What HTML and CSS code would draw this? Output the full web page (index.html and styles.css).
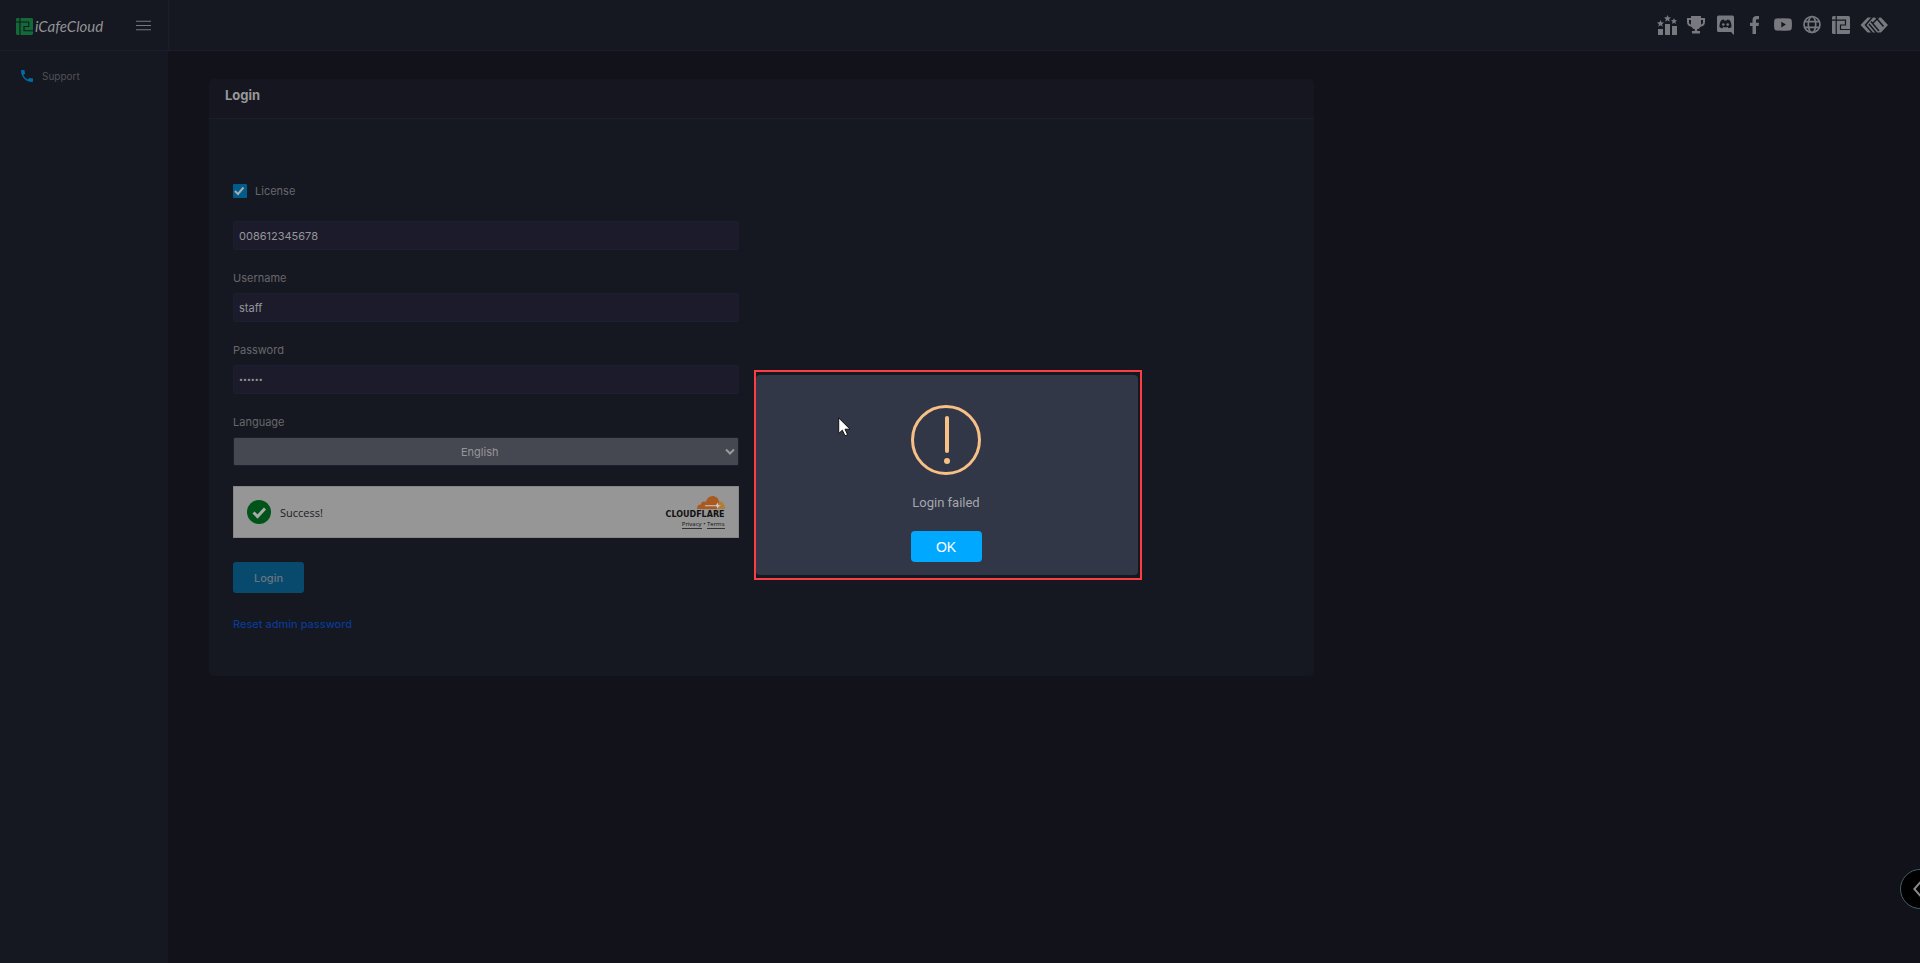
FILE: index.html
```html
<!DOCTYPE html>
<html lang="en">
<head>
<meta charset="utf-8">
<title>iCafeCloud - Login</title>
<link rel="stylesheet" href="styles.css">
</head>
<body>
<svg class="defs" aria-hidden="true">
  <symbol id="mark" viewBox="0 0 18 18"><rect width="18" height="18" rx="1.500"/><path fill="none" stroke="#151721" stroke-width="1.200" d="M4.200 0V18M0 4.200H13.500V9H8.500V13.500H18"/></symbol>
</svg>
<div class="app">
  <header class="topbar">
    <div class="brand">
      <a class="logo" href="#"><svg class="logo-mark"><use href="#mark"/></svg><span>iCafeCloud</span></a>
      <button class="menu" type="button" aria-label="Toggle menu"><svg viewBox="0 0 14 10"><path d="M0 1H14M0 5H14M0 9H14"/></svg></button>
    </div>
    <nav class="links" aria-label="Community">
      <a href="#" aria-label="Ranking"><svg viewBox="0 0 20 20"><path d="M1 14h5v6H1zM8 9h5v11H8zM15 11h5v9h-5zM10.500 0l1 2.300 2.500.2-1.900 1.700.6 2.500-2.200-1.400-2.200 1.400.6-2.500L7 2.500l2.500-.2zM3.500 5l1 2.300 2.500.2-1.900 1.700.6 2.500-2.200-1.400-2.200 1.400.6-2.500L0 7.500l2.500-.2zM17 3l.9 2 2.100.2-1.600 1.500.5 2.200-1.900-1.200-1.900 1.200.5-2.200L14 5.200l2.100-.2z"/></svg></a>
      <a href="#" aria-label="Tournaments"><svg viewBox="0 0 20 20"><path fill-rule="evenodd" d="M5 1h10v2h4v4c0 3-2 4.500-4.500 4.800C13.700 13.200 12.500 14 11.200 14.300V16H14v2.500H6V16h2.800v-1.700C7.500 14 6.300 13.200 5.500 11.800 3 11.500 1 10 1 7V3h4zM5 5H3v2c0 1.400.7 2.200 2 2.600zM15 5v4.600c1.300-.4 2-1.200 2-2.600V5z"/></svg></a>
      <a href="#" aria-label="Discord"><svg viewBox="0 0 20 20"><path fill-rule="evenodd" d="M3.500.5h14Q19 .5 19 2v18l-3-3H3.500Q2 17 2 15.500V2Q2 .5 3.500.5ZM6 5.500C5 7.500 4.400 9.500 4.500 12c1 .9 2 1.200 3 1.300l.7-1.200c1.500.4 3 .4 4.600 0l.7 1.200c1-.1 2-.5 3-1.300 0-2.500-.5-4.500-1.500-6.500-1-.5-1.800-.8-2.800-.9l-.4.9h-2.600l-.4-.9c-1 .1-1.900.4-2.800.9Z"/><circle cx="8.300" cy="9.500" r="1.300"/><circle cx="12.700" cy="9.500" r="1.300"/></svg></a>
      <a href="#" aria-label="Facebook"><svg viewBox="0 0 20 20"><path d="M8.500 19v-8H6V7.700h2.500V5c0-2.700 1.500-4 4-4H15v3.300h-1.600c-1.100 0-1.400.5-1.400 1.400v2H15l-.5 3.300H12v8z"/></svg></a>
      <a href="#" aria-label="YouTube"><svg viewBox="0 0 20 20"><path fill-rule="evenodd" d="M3.500 3.500Q10 3 16.500 3.500 18.500 3.500 18.700 5.500 19.200 9.500 18.700 13.500 18.500 15.500 16.500 15.500 10 16 3.500 15.500 1.500 15.500 1.300 13.500.8 9.500 1.300 5.500 1.500 3.500 3.500 3.500ZM8.300 6.800v5.600l4.600-2.800z"/></svg></a>
      <a href="#" aria-label="Website"><svg viewBox="0 0 20 20"><g fill="none" stroke="currentColor" stroke-width="1.700"><circle cx="10" cy="9.500" r="8"/><ellipse cx="10" cy="9.500" rx="3.700" ry="8"/><path d="M2.500 6.700h15M2.500 12.300h15"/></g></svg></a>
      <a href="#" aria-label="iCafeCloud"><svg viewBox="0 0 20 20"><use href="#mark" x="1" y="1" width="18" height="18"/></svg></a>
      <a class="wide" href="#" aria-label="Partner"><svg viewBox="0 0 28 20"><path d="M7.500 2.500H21L28 10L21 17.500H7.500L.5 10Z"/><path fill="none" stroke="#151721" stroke-width="1.500" d="M12.500 2L5.500 10L12.500 18M11 6.500L19 16M9 9L16.500 18M15.500 2L23.500 11.500M19 2L12.500 8.500"/></svg></a>
    </nav>
  </header>

  <aside class="sidebar">
    <a class="side-link" href="#"><svg viewBox="0 0 24 24"><path d="M6.620 10.790c1.440 2.830 3.760 5.140 6.590 6.590l2.200-2.200c.27-.27.67-.36 1.020-.24 1.120.37 2.330.57 3.570.57.550 0 1 .45 1 1V20c0 .55-.45 1-1 1-9.390 0-17-7.610-17-17 0-.55.45-1 1-1h3.500c.55 0 1 .45 1 1 0 1.250.2 2.450.57 3.570.11.35.03.74-.25 1.020l-2.200 2.200z"/></svg>Support</a>
  </aside>

  <main class="content">
    <section class="card">
      <h1 class="card-title">Login</h1>
      <div class="card-body">
        <form class="form">
          <div class="field license">
            <div class="check"><input id="has-license" type="checkbox" checked><label for="has-license">License</label></div>
            <input class="text" type="text" value="008612345678" aria-label="License number">
          </div>
          <div class="field"><label for="user">Username</label><input class="text" id="user" type="text" value="staff"></div>
          <div class="field"><label for="pass">Password</label><input class="text password" id="pass" type="password" value="abcdef"></div>
          <div class="field"><label for="lang">Language</label><select class="lang" id="lang"><option>English</option></select></div>
          <div class="captcha">
            <svg class="tick" viewBox="0 0 24 24"><circle cx="12" cy="12" r="12"/><path d="M6.500 12.500l4 4L18 8.500"/></svg>
            <span class="captcha-text">Success!</span>
            <div class="cf">
              <svg class="cloud" viewBox="0 0 28 13"><path fill="#a85a20" d="M0 13C0 10 1.500 8.700 4 8.600 4 6 6.500 4.800 8.700 6 10 2 12.500 0 15.500 0 19 0 21.500 2.300 22 5.500L21 13Z"/><path fill="#b37c34" d="M22 5.500C25.500 5.300 28 8 28 13H20Z"/><path fill="#ccc" d="M8 9.300l11-.1 1.500-2.700.8 2.500 2.700.7-2.500.8-1 2.200-1-2.400L8 10.200Z"/></svg>
              <span class="cf-name">CLOUDFLARE</span>
              <span class="cf-links"><a href="#">Privacy</a> • <a href="#">Terms</a></span>
            </div>
          </div>
          <button class="submit" type="submit">Login</button>
          <a class="reset" href="#">Reset admin password</a>
        </form>
      </div>
    </section>
  </main>
</div>

<div class="overlay">
  <div class="frame">
    <section class="dialog" role="alertdialog" aria-labelledby="message">
      <svg class="alert" viewBox="0 0 70 70"><circle cx="35" cy="35" r="33.500"/><path d="M36 13V46"/><circle class="dot" cx="36" cy="56" r="3"/></svg>
      <p class="message" id="message">Login failed</p>
      <button class="ok" type="button">OK</button>
    </section>
  </div>
</div>
<button class="drawer" type="button" aria-label="Open panel"><svg viewBox="0 0 40 40"><path d="M22 11L14 20L22 29"/></svg></button>
<svg class="pointer" viewBox="0 0 13 20" aria-hidden="true"><path d="M.7.9V16.500L4.300 13.200 7 18.800 9.600 17.700 7 12.200H12Z"/></svg>
</body>
</html>
```
FILE: styles.css
```css
* { box-sizing: border-box; }
body {
  margin: 0;
  background: #12121b;
  color: #68686c;
  font: 11px/16px Inter, "Open Sans", sans-serif;
  overflow: hidden;
}
a { color: inherit; text-decoration: none; }
button, input, select { font: inherit; }
button { border: 0; padding: 0; }
svg { display: block; fill: currentColor; }
.defs { position: absolute; width: 0; height: 0; }

.app {
  min-height: 100vh;
  display: grid;
  grid-template-columns: 168px 1fr;
  grid-template-rows: 51px 1fr;
}
.topbar {
  grid-column: 1 / -1;
  display: flex;
  justify-content: space-between;
  background: #151721;
  border-bottom: 1px solid #1d1c2e;
}
.brand {
  width: 169px;
  display: flex;
  align-items: center;
  justify-content: space-between;
  padding: 0 17px 0 16px;
  border-right: 1px solid #1d1c2e;
}
.logo { display: flex; align-items: center; gap: 2px; padding-top: 2px; color: #929295; font: italic 15px/20px Lato, sans-serif; }
.logo-mark { width: 17px; height: 17px; color: #126b36; }
.menu { background: none; color: #77787c; }
.menu svg { width: 15px; height: 11px; stroke: currentColor; stroke-width: 1; }
.links { display: flex; align-items: center; gap: 9px; padding: 0 32px 1px 0; color: #77797f; }
.links svg { width: 20px; height: 20px; }
.links .wide svg { width: 28px; }

.sidebar { background: #151721; padding: 17px 19px; }
.side-link { display: flex; align-items: center; gap: 7px; color: #515256; font-size: 10px; }
.side-link svg { width: 16px; height: 16px; color: #006ba4; }

.content { padding: 28px 27px; }
.card { width: calc(66.667% - 27px); margin-left: 14px; background: #151721; border-radius: 5px; }
.card-title {
  margin: 0;
  padding: 6px 16px 13px;
  background: #161620;
  border-bottom: 1px solid #1c1d2d;
  border-radius: 5px 5px 0 0;
  color: #98989a;
  font-size: 13px;
  line-height: 20px;
  font-weight: 700;
}
.card-body { padding: 64px 24px 44px; display: grid; grid-template-columns: 11fr 12fr; }
.form { display: flex; flex-direction: column; align-items: stretch; }
.field { display: flex; flex-direction: column; gap: 7px; margin-bottom: 20px; }
.license { gap: 22px; }
.check { display: flex; align-items: center; gap: 8px; }
.check input {
  appearance: none;
  width: 14px;
  height: 14px;
  margin: 0;
  border-radius: 1px;
  background: #005c8a url("data:image/svg+xml,%3Csvg xmlns='http://www.w3.org/2000/svg' viewBox='0 0 14 14'%3E%3Cpath d='M2 7l3 3 5.500-6.500' fill='none' stroke='%23aaa' stroke-width='2'/%3E%3C/svg%3E");
}
.text, .lang { width: 100%; height: 29px; border: 1px solid #1e1e30; border-radius: 2px; padding: 0 5px; color: #969698; }
.text { background: #1b1b2c; }
.password { font-size: 7px; }
.lang {
  appearance: none;
  padding-right: 17px;
  text-align-last: center;
  background: #454851 url("data:image/svg+xml,%3Csvg xmlns='http://www.w3.org/2000/svg' viewBox='0 0 10 8'%3E%3Cpath d='M1 1.500l4 4 4-4' fill='none' stroke='%23999' stroke-width='2'/%3E%3C/svg%3E") no-repeat right 3px center / 10px 8px;
}
.captcha {
  height: 52px;
  display: flex;
  align-items: center;
  padding: 0 13px;
  background: #969696;
  border: 1px solid #858585;
  color: #202020;
}
.tick { width: 24px; height: 24px; color: #00541a; }
.tick path { fill: none; stroke: #aaa; stroke-width: 3; }
.captcha-text { margin-left: 9px; padding-top: 2px; font: 11px/18px "Open Sans", sans-serif; }
.cf { margin-left: auto; display: flex; flex-direction: column; align-items: flex-end; color: #111; }
.cloud { width: 28px; height: 13px; }
.cf-name { font: bold 8px/11px "DejaVu Sans", sans-serif; }
.cf-links { font: 6px/9px "Open Sans", sans-serif; }
.cf-links a { border-bottom: 1px solid #333; }
.submit { align-self: flex-start; width: 71px; height: 31px; margin-top: 24px; border-radius: 3px; background: #084a6e; color: #68747f; font-weight: 500; }
.reset { align-self: flex-start; margin-top: 23px; color: #0a3a91; font-weight: 500; }

.overlay {
  position: fixed;
  inset: 0;
  display: flex;
  align-items: center;
  justify-content: center;
  padding: 0 24px 13px 0;
}
.frame { width: 388px; padding: 3px 2px 3px 0; border: 2px solid #fb3e41; background: #151721; }
.dialog { display: flex; flex-direction: column; align-items: center; padding: 30px 22px 13px 20px; background: #323747; border-radius: 4px; }
.alert { width: 70px; height: 70px; color: #f8c086; fill: none; stroke: currentColor; stroke-width: 3; }
.alert path { stroke-width: 4; stroke-linecap: round; }
.alert .dot { fill: currentColor; stroke: none; }
.message { margin: 18px 0; color: #a4a6ac; font: 13px/20px Roboto, sans-serif; }
.ok { width: 71px; height: 31px; border-radius: 4px; background: #00a8ff; color: #fff; font: 14px/20px "Liberation Sans", sans-serif; }

.drawer { position: fixed; right: -20px; bottom: 54px; width: 40px; height: 40px; border: 1px solid #42606b; border-radius: 50%; background: #000; color: #8b8b8b; }
.drawer svg { width: 38px; height: 38px; fill: none; stroke: currentColor; stroke-width: 2; }
.pointer { position: fixed; left: 838px; top: 417px; width: 13px; height: 20px; fill: #fff; stroke: #111; stroke-width: 1; }
```
